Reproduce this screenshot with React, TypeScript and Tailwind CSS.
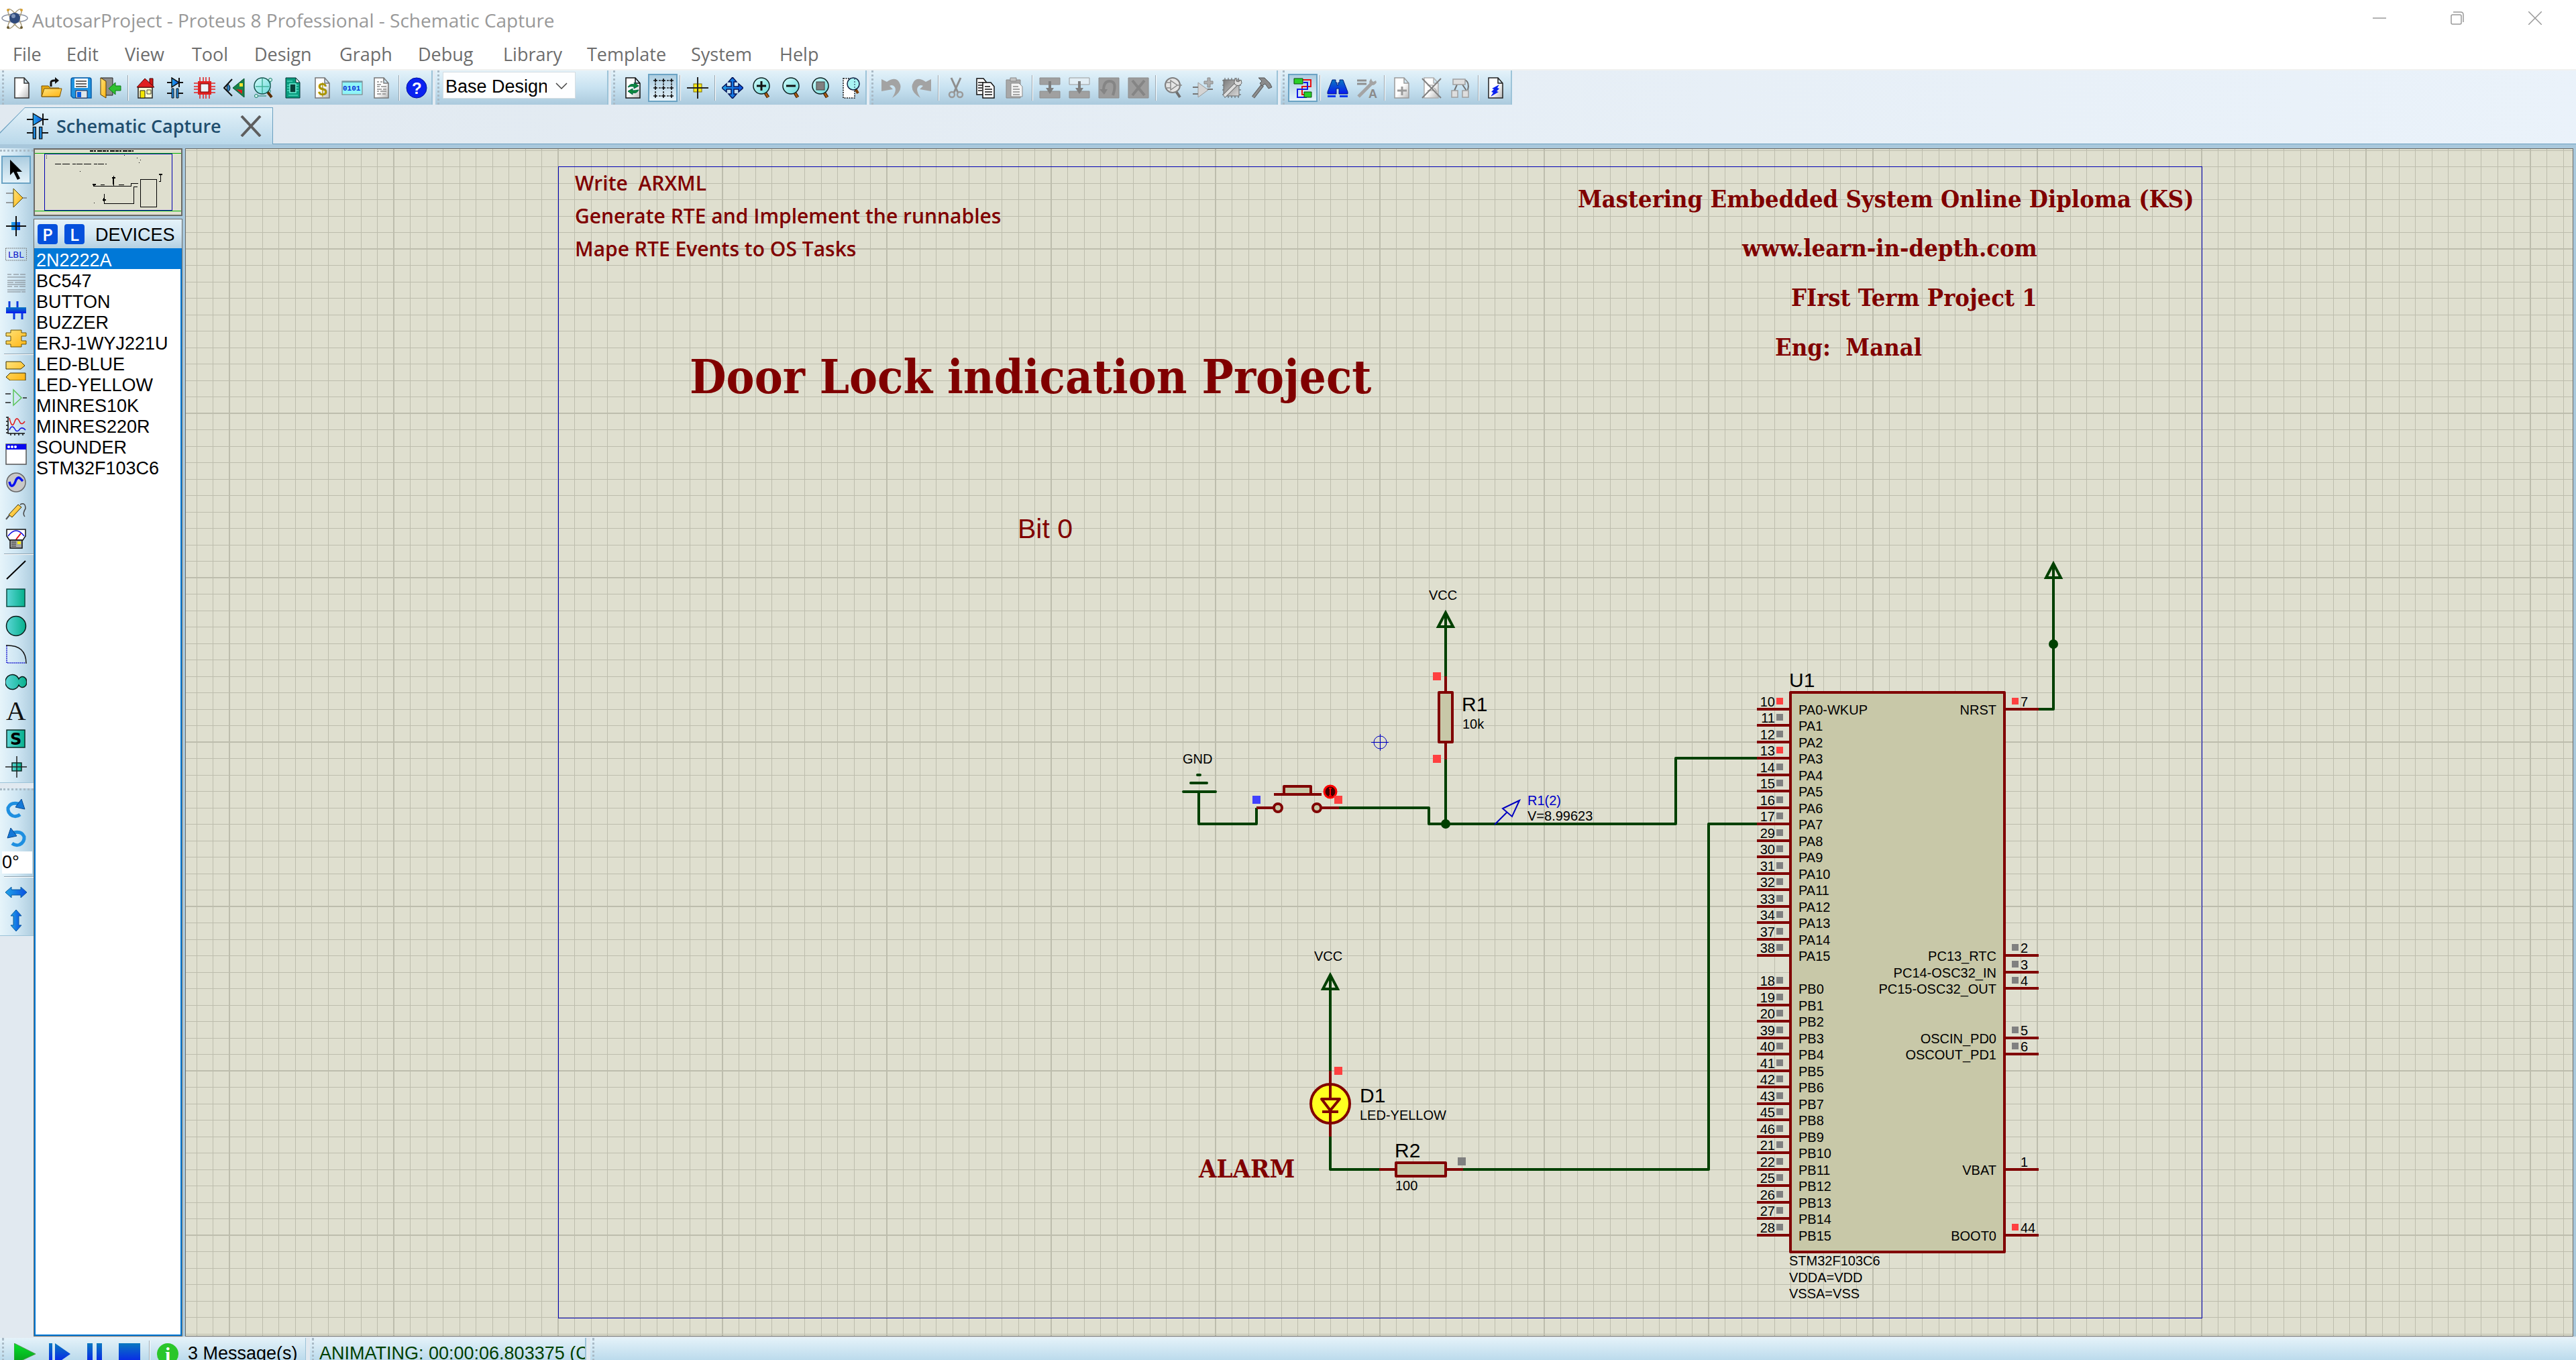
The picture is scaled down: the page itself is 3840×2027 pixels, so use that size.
import React from "react";

/* ---------- shared helpers ---------- */

const Icon = ({ children, className = "size-8" }: { children: React.ReactNode; className?: string }) => (
  <svg viewBox="0 0 32 32" className={className} fill="none" aria-hidden="true">
    {children}
  </svg>
);

const Defs = () => (
  <svg className="absolute size-0" aria-hidden="true">
    <defs>
      <linearGradient id="gold" x1="0" y1="0" x2="1" y2="1">
        <stop offset="0" stopColor="#ffe37a" />
        <stop offset="1" stopColor="#ffb412" />
      </linearGradient>
      <linearGradient id="blue" x1="0" y1="0" x2="1" y2="0">
        <stop offset="0" stopColor="#22a4e8" />
        <stop offset="1" stopColor="#0a4fe0" />
      </linearGradient>
      <linearGradient id="deep" x1="0" y1="0" x2="0" y2="1">
        <stop offset="0" stopColor="#0a78c0" />
        <stop offset="1" stopColor="#0818f0" />
      </linearGradient>
      <linearGradient id="teal" x1="0" y1="0" x2="1" y2="0">
        <stop offset="0" stopColor="#5cd6d6" />
        <stop offset="1" stopColor="#06b08c" />
      </linearGradient>
      <linearGradient id="paper" x1="0" y1="0" x2="1" y2="1">
        <stop offset="0.5" stopColor="#ffffff" />
        <stop offset="1" stopColor="#b8b8b8" />
      </linearGradient>
      <linearGradient id="play" x1="0" y1="0" x2="0" y2="1">
        <stop offset="0" stopColor="#06e02a" />
        <stop offset="1" stopColor="#079a1c" />
      </linearGradient>
      <linearGradient id="chip" x1="0" y1="0" x2="1" y2="1">
        <stop offset="0" stopColor="#7c7c7c" />
        <stop offset="1" stopColor="#d8d8d8" />
      </linearGradient>
      <linearGradient id="glass" x1="0" y1="0" x2="1" y2="1">
        <stop offset="0" stopColor="#d4fbfb" />
        <stop offset="1" stopColor="#6adada" />
      </linearGradient>
    </defs>
  </svg>
);

const page = (stroke: string) => (
  <path d="M5 1H19l7 8v22H5z M19 1v8h7" fill="url(#paper)" stroke={stroke} strokeWidth="1.5" />
);

const lens = (
  <>
    <path d="M20 22l5 8" stroke="#2b1400" strokeWidth="5" />
    <path d="M20 22l5 8" stroke="#a85a10" strokeWidth="3" />
    <circle cx="15" cy="13" r="12" fill="url(#glass)" stroke="#0d2020" strokeWidth="1.5" />
  </>
);

/* ---------- toolbar icons ---------- */

const I = {
  blank: <Icon>{page("#333")}</Icon>,
  open: (
    <Icon>
      <path d="M1 29V13h10l3 3h13v13z" fill="#e5a810" stroke="#7a5200" />
      <path d="M1 29l4-12h26l-3 12z" fill="url(#gold)" stroke="#7a5200" />
      <path d="M15 14V8q0-3 5-3h4" stroke="#111" strokeWidth="3" />
      <path d="M21 0l6 5-6 5z" fill="#111" />
    </Icon>
  ),
  save: (
    <Icon>
      <path d="M1 4q0-3 3-3h24q3 0 3 3v27H4l-3-3z" fill="#1f93e0" stroke="#0a5da8" strokeWidth="1.5" />
      <path d="M6 2h20v14H6z" fill="#fff" />
      <path d="M8 6h16M8 10h16M8 14h16" stroke="#333" strokeWidth="1.5" />
      <path d="M8 20h17v11H8z" fill="#dfe6ea" stroke="#224" />
      <path d="M10 22h6v8h-6z" fill="#0a5de0" />
    </Icon>
  ),
  exit: (
    <Icon>
      <path d="M1 1h18v26H9z" fill="#8d8d8d" stroke="#222" />
      <path d="M1 1l8 5v25l-8-5z" fill="url(#gold)" stroke="#5c3c00" />
      <path d="M31 13v7h-8v6l-10-9 10-9v5z" fill="#2fc02f" stroke="#0e7a1a" />
    </Icon>
  ),
  home: (
    <Icon>
      <path d="M22 2h5v12h-5z" fill="#d01818" stroke="#400" />
      <path d="M5 15h21v16H5z" fill="#ffffd8" stroke="#222" strokeWidth="1.5" />
      <path d="M3 15L15 2l14 13z" fill="#e02020" stroke="#500" />
      <path d="M8 20h7v11H8z" fill="#f6e800" stroke="#222" />
      <path d="M18 19h6v6h-6z" fill="#fffbb0" stroke="#444" />
    </Icon>
  ),
  schematic: (
    <Icon>
      <path d="M4 8h24M22 1v14M4 24h8M20 24h8" stroke="#111" strokeWidth="2" />
      <path d="M11 1v14l11-7z" fill="url(#blue)" stroke="#111" strokeWidth="1.5" />
      <path d="M11 17h3v14h-3zM18 17h3v14h-3z" fill="#1f8ae0" stroke="#111" />
    </Icon>
  ),
  pcb: (
    <Icon>
      <path
        d="M9 0v32M14 0v32M18 0v32M23 0v32M0 9h32M0 14h32M0 18h32M0 23h32"
        stroke="#e02020"
        strokeWidth="1.5"
      />
      <rect x="6" y="6" width="20" height="20" fill="#e02020" />
      <rect x="10" y="10" width="12" height="12" fill="#eef4f8" stroke="#700" />
    </Icon>
  ),
  viewer3d: (
    <Icon>
      <path d="M31 2v28L14 16z" fill="#18834a" stroke="#04502a" />
      <path d="M24 9h5v5h-5z" fill="#f5e430" />
      <path d="M19 18l9 1v6z" fill="#e01c1c" />
      <path d="M13 3L1 16l12 12" stroke="#111" strokeWidth="2" />
      <path d="M7 10q6 6 0 12q-4-6 0-12" fill="#2f7fc0" stroke="#111" />
    </Icon>
  ),
  gerber: (
    <Icon>
      <path d="M21 21l7 9" stroke="#5a2c00" strokeWidth="4" />
      <circle cx="14" cy="13" r="12" fill="url(#glass)" stroke="#14554e" strokeWidth="1.5" />
      <path d="M4 14h20M14 2v22" stroke="#43b39b" strokeWidth="1.5" />
      <path d="M26 3v8M26 19v4M6 28h14" stroke="#127c68" />
      <circle cx="26" cy="4" r="2.5" fill="#d7f5ee" stroke="#127c68" />
      <circle cx="5" cy="28" r="2.5" fill="#d7f5ee" stroke="#127c68" />
    </Icon>
  ),
  explorer: (
    <Icon>
      <path d="M5 1h15l6 7v23H5z" fill="#0a9c7e" stroke="#033" />
      <path d="M20 1v7h6z" fill="#fff" stroke="#033" />
      <rect x="11" y="10" width="9" height="13" fill="#083f38" stroke="#6ff0d8" strokeWidth="1.5" />
      <path d="M7 6h8M7 12h4M7 16h4M7 20h4M20 12h4M20 16h4M20 20h4M9 27h14" stroke="#6ff0d8" />
    </Icon>
  ),
  bom: (
    <Icon>
      {page("#777")}
      <text x="9" y="27" fontSize="25" fontWeight="700" fill="#a89400" className="font-['Liberation_Sans',sans-serif]">
        $
      </text>
    </Icon>
  ),
  source: (
    <Icon>
      <rect x="1" y="6" width="30" height="20" fill="#8ff4f8" stroke="#777" />
      <rect x="1" y="6" width="30" height="2" fill="#6f9aa8" />
      <text x="2" y="20" fontSize="11" fontWeight="700" fill="#0a2fd8" className="font-['Liberation_Mono',monospace]">
        0101
      </text>
    </Icon>
  ),
  notes: (
    <Icon>
      {page("#777")}
      <path
        d="M9 7h3M14 7h3M9 11h6M9 14h4M15 14h8M9 18h7M18 18h5M9 21h3M14 21h9M9 25h6M17 25h5"
        stroke="#8a8a8a"
        strokeWidth="1.5"
      />
    </Icon>
  ),
  help: (
    <Icon>
      <circle cx="16" cy="16" r="15" fill="#0a22f0" stroke="#0012a0" />
      <text x="9" y="25" fontSize="24" fontWeight="700" fill="#fff" className="font-['Liberation_Sans',sans-serif]">
        ?
      </text>
    </Icon>
  ),
  redraw: (
    <Icon>
      {page("#111")}
      <path d="M8 15q3-6 10-4l-1-3 7 5-7 4v-3q-5-1-9 1z" fill="#0d8a3c" stroke="#064" />
      <path d="M24 19q-3 6-9 4v3l-7-5 7-4v3q5 0 9-1z" fill="#0d8a3c" stroke="#064" />
    </Icon>
  ),
  grid: (
    <Icon>
      <path d="M4 5h26M4 16h26M4 28h26M5 3v27M17 3v27M29 3v27" stroke="#222" strokeWidth="1.5" strokeDasharray="3 3" />
      <path
        d="M2 5h6M14 5h6M26 5h6M2 16h6M14 16h6M26 16h6M2 28h6M14 28h6M26 28h6M5 2v6M17 2v6M29 2v6M5 13v6M17 13v6M29 13v6M5 25v6M17 25v6M29 25v6"
        stroke="#111"
        strokeWidth="1.5"
      />
    </Icon>
  ),
  origin: (
    <Icon>
      <rect x="10" y="10" width="12" height="12" fill="#f6e81a" stroke="#7a6a00" />
      <path d="M16 0v32M0 16h32" stroke="#222" strokeWidth="2" />
    </Icon>
  ),
  pan: (
    <Icon>
      <path
        d="M16 0l6 7h-4v7h7v-4l7 6-7 6v-4h-7v7h4l-6 7-6-7h4v-7H7v4l-7-6 7-6v4h7V7h-4z"
        fill="url(#blue)"
        stroke="#04155a"
        strokeWidth="1.5"
      />
    </Icon>
  ),
  zoomIn: (
    <Icon>
      {lens}
      <path d="M15 6v14M8 13h14" stroke="#111" strokeWidth="3" />
    </Icon>
  ),
  zoomOut: (
    <Icon>
      {lens}
      <path d="M8 13h14" stroke="#111" strokeWidth="3" />
    </Icon>
  ),
  zoomAll: (
    <Icon>
      {lens}
      <rect x="9" y="7" width="12" height="12" fill="#808080" stroke="#444" />
    </Icon>
  ),
  zoomArea: (
    <Icon>
      <rect x="5" y="2" width="17" height="29" fill="#fff" stroke="#111" strokeWidth="1.5" strokeDasharray="2 1.5" />
      <path d="M23 17l4 7" stroke="#7a3f08" strokeWidth="4" />
      <circle cx="20" cy="10" r="9" fill="#a8f4f4" stroke="#124" strokeWidth="1.5" />
      <path d="M22 2v16" stroke="#124" strokeDasharray="2 2" />
    </Icon>
  ),
  undo: (
    <Icon>
      <path d="M9 7Q24-3 29 11Q32 22 17 31Q24 20 21 15Q18 10 13 13l5 5L1 21V3z" fill="#a3a3a3" />
    </Icon>
  ),
  redo: (
    <Icon>
      <path d="M23 7Q8-3 3 11Q0 22 15 31Q8 20 11 15Q14 10 19 13l-5 5 17 3V3z" fill="#a3a3a3" />
    </Icon>
  ),
  cut: (
    <Icon>
      <path d="M9 1l10 22M23 1L13 23" stroke="#8e8e8e" strokeWidth="3" />
      <circle cx="10" cy="26" r="4" stroke="#9a9a9a" strokeWidth="2.5" />
      <circle cx="22" cy="26" r="4" stroke="#9a9a9a" strokeWidth="2.5" />
    </Icon>
  ),
  copy: (
    <Icon>
      <path d="M3 2h10l4 5v19H3z" fill="#fff" stroke="#111" strokeWidth="1.5" />
      <path d="M5 8h8M5 12h8M5 16h6M5 20h6" stroke="#111" strokeWidth="1.5" />
      <path d="M12 8h12l5 6v17H12z" fill="#fff" stroke="#111" strokeWidth="1.5" />
      <path d="M15 14h8M15 18h11M15 22h11M15 26h11" stroke="#111" strokeWidth="1.5" />
    </Icon>
  ),
  paste: (
    <Icon>
      <path d="M3 4h21v27H3z" fill="#a8a8a8" stroke="#8a8a8a" />
      <path d="M9 1h9v5H9z" fill="#c4c4c4" stroke="#888" />
      <path d="M10 9h12l5 5v15H10z" fill="#f4f4f4" stroke="#8a8a8a" />
      <path d="M13 14h8M13 18h10M13 22h10M13 26h10" stroke="#8a8a8a" strokeWidth="1.5" />
    </Icon>
  ),
  blockCopy: (
    <Icon>
      <path d="M1 1h30v10H1zM1 21h30v10H1z" fill="#a0a0a0" stroke="#8c8c8c" />
      <path d="M14 6h4v10h4l-6 9-6-9h4z" fill="#7e7e7e" />
    </Icon>
  ),
  blockMove: (
    <Icon>
      <path d="M1 1h30v10H1z" fill="#e2eef5" stroke="#9a9a9a" />
      <path d="M1 21h30v10H1z" fill="#a0a0a0" stroke="#8c8c8c" />
      <path d="M14 6h4v10h4l-6 9-6-9h4z" fill="#7e7e7e" />
    </Icon>
  ),
  blockRotate: (
    <Icon>
      <path d="M1 1h30v30H1z" fill="#9c9c9c" stroke="#8c8c8c" />
      <path d="M22 27Q29 6 17 6Q8 6 8 20" stroke="#858585" strokeWidth="4" />
      <path d="M2 18l7 8 5-8z" fill="#858585" />
    </Icon>
  ),
  blockDelete: (
    <Icon>
      <path d="M1 1h30v30H1z" fill="#9c9c9c" stroke="#8c8c8c" />
      <path d="M7 5l18 22M25 5L7 27" stroke="#858585" strokeWidth="4" />
    </Icon>
  ),
  pick: (
    <Icon>
      <path d="M20 21l6 9" stroke="#6e6e6e" strokeWidth="4" />
      <circle cx="15" cy="12" r="11" fill="#e4e4e4" stroke="#808080" strokeWidth="2" />
      <path d="M6 8h6M6 16h6M12 5v14l10-7zM22 12h7" stroke="#8a8a8a" strokeWidth="1.5" />
    </Icon>
  ),
  makeDevice: (
    <Icon>
      <path d="M9 8v22l15-11z" fill="#d4d4d4" stroke="#9a9a9a" />
      <path d="M1 15h8M1 25h8M23 18h8" stroke="#777" strokeWidth="2" />
      <path d="M23 1h4v5h4v4h-4v5h-4v-5h-5V6h5z" fill="#b0b0b0" stroke="#888" />
    </Icon>
  ),
  packaging: (
    <Icon>
      <path d="M5 1v30M10 1v30M15 1v30M20 1v30M25 1v30M1 5h28M1 12h28M1 19h28M1 26h28" stroke="#555" />
      <rect x="3" y="4" width="23" height="24" fill="url(#chip)" stroke="#666" />
      <path d="M4 28L22 10" stroke="#666" strokeWidth="6" />
      <path d="M4 28L22 10" stroke="#dedede" strokeWidth="4" />
      <path d="M22 1q-5 5-2 10q6 4 10-2l-1-5-4 3-3-1z" fill="#dedede" stroke="#666" />
    </Icon>
  ),
  decompose: (
    <Icon>
      <path d="M3 30L17 12" stroke="#555" strokeWidth="5" />
      <path d="M3 30L17 12" stroke="#8d8d8d" strokeWidth="3" />
      <path d="M11 1h9l8 8 3 6-5 2-5-7-5 3-3-4 3-3z" fill="#8a8a8a" stroke="#555" />
    </Icon>
  ),
  autoroute: (
    <Icon>
      <path d="M16 4h12v10H15v12h4" stroke="#e81010" strokeWidth="2" />
      <path d="M17 8h6v10H8v12h14" stroke="#1018e8" strokeWidth="2" />
      <path d="M3 2h13v8H3zM18 22h11v8H18z" fill="#28d028" stroke="#064a06" />
    </Icon>
  ),
  find: (
    <Icon>
      <path d="M8 4h5v4h2v4h2V8h2V4h5l7 18v3H18v-8h-4v8H1v-3z" fill="url(#deep)" stroke="#041a80" />
      <path d="M1 27h12v3H1zM19 27h12v3H19z" fill="#0a38f0" />
    </Icon>
  ),
  property: (
    <Icon>
      <path d="M1 5h14M1 10h14" stroke="#909090" strokeWidth="3" />
      <path d="M3 29L22 10" stroke="#a4a4a4" strokeWidth="5" />
      <path d="M22 2q-5 5-1 9q5 3 9-3l-1-3-4 2-2-2z" fill="#a4a4a4" />
      <text x="18" y="31" fontSize="18" fontWeight="700" fill="#8a8a8a" className="font-['Liberation_Sans',sans-serif]">
        A
      </text>
    </Icon>
  ),
  newSheet: (
    <Icon>
      {page("#9a9a9a")}
      <path d="M16 14v13M9 20h14" stroke="#9a9a9a" strokeWidth="3" />
    </Icon>
  ),
  removeSheet: (
    <Icon>
      {page("#b0b0b0")}
      <path d="M10 12h8v8h-8M20 16l4 6" stroke="#b0b0b0" strokeWidth="1.5" />
      <path d="M2 2l28 29M30 2L2 31" stroke="#808080" strokeWidth="2" />
    </Icon>
  ),
  exitSheet: (
    <Icon>
      <path d="M10 11L6 20M18 11l6 9M22 4q7 4 4 15" stroke="#707070" strokeWidth="2" />
      <path d="M4 3h18v8H4zM2 20h9v10H2zM18 20h9v10h-9z" fill="#dedede" stroke="#a0a0a0" strokeWidth="1.5" />
    </Icon>
  ),
  erc: (
    <Icon>
      {page("#222")}
      <path d="M21 11L10 17l3 1-4 4 3 1-4 6 12-7-3-1 4-4-3-1z" fill="#0a22f0" />
    </Icon>
  ),
  /* mode selector icons */
  select: (
    <Icon>
      <path d="M7 1v23l5-5 6 12 4-2-5-10h8z" fill="#000" />
    </Icon>
  ),
  component: (
    <Icon>
      <path d="M1 9h11M1 23h11M24 16h8" stroke="#808080" strokeWidth="1.5" />
      <path d="M12 2v28l14-14z" fill="url(#gold)" stroke="#5a4a00" />
    </Icon>
  ),
  junction: (
    <Icon>
      <rect x="9" y="10" width="13" height="12" fill="url(#blue)" />
      <path d="M16 1v30M1 16h30" stroke="#111" strokeWidth="2" />
    </Icon>
  ),
  label: (
    <Icon>
      <rect x="0.5" y="7" width="31" height="18" stroke="#777" strokeDasharray="2 1" />
      <text x="4" y="21" fontSize="13" fill="#0a12c8" className="font-['DejaVu_Sans',sans-serif]">
        LBL
      </text>
    </Icon>
  ),
  script: (
    <Icon>
      <path
        d="M3 4h6M12 4h8M22 4h8M3 8h27M3 13h27M3 16h9M14 16h16M3 19h27M3 22h7M13 22h6M21 22h9M3 27h27M3 30h20M24 30h6"
        stroke="#7c8288"
      />
    </Icon>
  ),
  bus: (
    <Icon>
      <path d="M6 2v10M18 2v10M13 18v11M25 18v11" stroke="#0a38e0" strokeWidth="3" />
      <rect x="1" y="11" width="30" height="9" fill="url(#deep)" />
    </Icon>
  ),
  subcircuit: (
    <Icon>
      <path d="M8 3h16v4h7v5h-7v7h7v5h-7v4H8v-4H1v-5h7v-7H1V7h7z" fill="url(#gold)" stroke="#6b5200" />
    </Icon>
  ),
  terminal: (
    <Icon>
      <path d="M1 4h22l6 6-6 5H1zM30 21H7l-6 6 6 5h23z" fill="url(#gold)" stroke="#3c3000" />
    </Icon>
  ),
  pin: (
    <Icon>
      <path d="M0 10h8M0 23h8M26 16h6" stroke="#222" strokeWidth="1.5" />
      <path d="M12 4v23l12-11z" stroke="#5cc45c" strokeWidth="1.5" />
    </Icon>
  ),
  graph: (
    <Icon>
      <path
        d="M4 2v25h25M1 3h3M1 9h3M1 15h3M1 21h3M1 26h3M8 27v3M14 27v3M20 27v3M26 27v3"
        stroke="#111"
        strokeWidth="1.5"
      />
      <path d="M6 4q4 18 8 5q3-9 8 2q3 4 7-2" stroke="#e01818" strokeWidth="1.5" />
      <path d="M6 22q4-10 9 0q3 4 7-2q4-3 8 2" stroke="#1818e0" strokeWidth="1.5" />
    </Icon>
  ),
  popup: (
    <Icon>
      <rect x="1" y="1" width="30" height="30" fill="#fff" stroke="#555" strokeWidth="1.5" />
      <rect x="1" y="1" width="30" height="8" fill="#0808f0" />
      <circle cx="5" cy="5" r="2" fill="#fff" />
      <circle cx="10" cy="5" r="2" fill="#fff" />
      <circle cx="15" cy="5" r="2" fill="#fff" />
    </Icon>
  ),
  generator: (
    <Icon>
      <circle cx="16" cy="16" r="14" fill="#c8c8c8" stroke="#666" strokeWidth="1.5" />
      <path d="M6 15q2 9 6 5q2-2 4-8q3-5 6-2l4 4" stroke="#0a12f0" strokeWidth="3.5" />
    </Icon>
  ),
  probe: (
    <Icon>
      <path d="M1 29l5-6" stroke="#555" strokeWidth="2" />
      <path d="M5 22L19 7l5 4L10 26z" fill="url(#gold)" stroke="#3c3000" />
      <path d="M22 7q8-4 8 6q-5 8-1 12" stroke="#444" strokeWidth="1.5" />
    </Icon>
  ),
  instrument: (
    <Icon>
      <path d="M2 2h28v10l-4 6H6l-4-6z" fill="#fff" stroke="#111" strokeWidth="1.5" />
      <path d="M4 12Q16-4 28 12" stroke="#1010e0" strokeWidth="1.5" />
      <path d="M16 17l7-9" stroke="#e01010" strokeWidth="2" />
      <rect x="7" y="18" width="18" height="12" fill="#a8a8a8" stroke="#111" strokeWidth="1.5" />
      <path d="M9 21h7M9 24h7M9 27h7" stroke="#222" />
      <path d="M18 20h5v4h-5z" fill="#f6ee10" />
    </Icon>
  ),
  line: (
    <Icon>
      <path d="M2 30L30 3" stroke="#000" strokeWidth="2" />
    </Icon>
  ),
  box: (
    <Icon>
      <rect x="2" y="3" width="27" height="26" fill="url(#teal)" stroke="#0a4a40" strokeWidth="1.5" />
    </Icon>
  ),
  circle: (
    <Icon>
      <circle cx="16" cy="16" r="14.5" fill="url(#teal)" stroke="#0a1a18" strokeWidth="1.5" />
    </Icon>
  ),
  arc: (
    <Icon>
      <path d="M2 3v26H31" stroke="#1818d0" strokeWidth="1.5" strokeDasharray="2 1" />
      <path d="M1 3q30-1 30 27" stroke="#111" strokeWidth="1.5" />
    </Icon>
  ),
  path: (
    <Icon>
      <path d="M20 11a10.5 11 0 1 0 0 9a6.5 8 0 1 0 0-9z" fill="url(#teal)" stroke="#0a1a18" strokeWidth="1.5" />
    </Icon>
  ),
  text: (
    <Icon>
      <text x="1" y="30" fontSize="41" fill="#111" className="font-['Liberation_Serif',serif]">
        A
      </text>
    </Icon>
  ),
  symbol: (
    <Icon>
      <rect x="2" y="3" width="27" height="26" fill="url(#teal)" stroke="#0a2a24" strokeWidth="1.5" />
      <text x="7" y="25" fontSize="24" fontWeight="700" fill="#000" className="font-['DejaVu_Sans',sans-serif]">
        S
      </text>
    </Icon>
  ),
  marker: (
    <Icon>
      <rect x="10" y="10" width="14" height="12" fill="url(#teal)" stroke="#0a2a24" strokeWidth="1.5" />
      <path d="M17 0v32M0 16h32" stroke="#222" strokeWidth="1.5" />
    </Icon>
  ),
  rotateCw: (
    <Icon>
      <path d="M22 24Q17 28 11 26Q3 22 4 14Q8 5 20 8" stroke="#1f8fe0" strokeWidth="5" />
      <path d="M24 1l5 15-14-3z" fill="#1478d8" stroke="#0a4a90" />
    </Icon>
  ),
  rotateCcw: (
    <Icon>
      <path d="M10 25Q15 29 21 27Q29 23 28 15Q24 6 12 9" stroke="#1f8fe0" strokeWidth="5" />
      <path d="M8 2L3 17l14-3z" fill="#1478d8" stroke="#0a4a90" />
    </Icon>
  ),
  mirrorH: (
    <Icon>
      <path d="M0 16l9-8v4h14V8l9 8-9 8v-4H9v4z" fill="url(#blue)" stroke="#0a5aa0" />
    </Icon>
  ),
  mirrorV: (
    <Icon>
      <path d="M16 0l8 9h-4v14h4l-8 9-8-9h4V9H8z" fill="url(#blue)" stroke="#0a5aa0" />
    </Icon>
  ),
  play: (
    <Icon>
      <path d="M0 0v31l32-15z" fill="url(#play)" stroke="#4a9a4a" />
    </Icon>
  ),
  step: (
    <Icon>
      <path d="M0 0h5v32H0zM9 0l23 16L9 32z" fill="url(#deep)" />
    </Icon>
  ),
  pause: (
    <Icon>
      <path d="M5 0h8v32H5zM19 0h8v32h-8z" fill="url(#deep)" />
    </Icon>
  ),
  stop: (
    <Icon>
      <rect width="32" height="32" fill="url(#deep)" />
    </Icon>
  ),
  info: (
    <Icon>
      <circle cx="16" cy="16" r="16" fill="#2ac62a" />
      <text x="12" y="27" fontSize="30" fontWeight="700" fill="#fff" className="font-['Liberation_Serif',serif]">
        i
      </text>
    </Icon>
  ),
};

type Item = [keyof typeof I, string] | "sep";

const GROUP_BG = "bg-linear-to-b from-[#e4f2f9] via-[#c8e2f1] to-[#abcadd]";

const Grip = () => <div className="ml-[3px] h-full w-[3px] border-l-[3px] border-dotted border-[#a9bac6]" />;

const ToolButton = ({ name, label, active }: { name: keyof typeof I; label: string; active?: boolean }) => (
  <button
    type="button"
    title={label}
    aria-label={label}
    className={
      "flex h-[42px] w-[44px] shrink-0 items-center justify-center " +
      (active ? "border-2 border-[#6ba3c4] bg-linear-to-b from-[#accde0] to-[#e4f2f9]" : "")
    }
  >
    {I[name]}
  </button>
);

const Group = ({ items, active, children }: { items?: Item[]; active?: string; children?: React.ReactNode }) => (
  <div className={"flex h-[51px] items-center border-r-2 border-[#9cc3d8] " + GROUP_BG}>
    <Grip />
    <div className="ml-[5px] flex items-center">
      {items?.map((it, i) =>
        it === "sep" ? (
          <span key={i} className="flex w-2 justify-center">
            <span className="h-[38px] w-[2px] border-r border-white bg-[#9aa7b0]" />
          </span>
        ) : (
          <ToolButton key={i} name={it[0]} label={it[1]} active={active === it[0]} />
        )
      )}
      {children}
    </div>
  </div>
);

/* ---------- header ---------- */

const MENU: [string, string][] = [
  ["File", "w-[80px]"],
  ["Edit", "w-[87px]"],
  ["View", "w-[100px]"],
  ["Tool", "w-[93px]"],
  ["Design", "w-[127px]"],
  ["Graph", "w-[117px]"],
  ["Debug", "w-[127px]"],
  ["Library", "w-[125px]"],
  ["Template", "w-[155px]"],
  ["System", "w-[132px]"],
  ["Help", "w-[90px]"],
];

const TitleBar = () => (
  <header className="flex h-[62px] shrink-0 items-start bg-white pl-[2px]">
    <svg viewBox="0 0 40 32" className="mt-3 h-8 w-10" fill="none" aria-hidden="true">
      <ellipse cx="20" cy="15" rx="19" ry="6" stroke="#8b93a5" strokeWidth="1.5" />
      <ellipse cx="20" cy="16" rx="17" ry="5" stroke="#a79a7a" strokeWidth="1.5" transform="rotate(57 20 16)" />
      <ellipse cx="20" cy="16" rx="17" ry="5" stroke="#a79a7a" strokeWidth="1.5" transform="rotate(-57 20 16)" />
      <circle cx="20" cy="15" r="8" fill="#2f4a7c" />
      <circle cx="18" cy="12" r="3" fill="#7f95ba" />
      <circle cx="10" cy="3" r="2" fill="#d8a030" />
      <circle cx="30" cy="3" r="2" fill="#d8a030" />
      <circle cx="10" cy="29" r="2" fill="#6b5a30" />
      <circle cx="30" cy="29" r="2" fill="#6b5a30" />
    </svg>
    <h1 className="mt-[10px] ml-[6px] text-[28px] leading-10 text-[#999999]">
      AutosarProject - Proteus 8 Professional - Schematic Capture
    </h1>
    <div className="ml-auto flex pr-[3px]">
      {[
        ["Minimize", "M0 10h20"],
        ["Restore", "M3 5h11a2 2 0 0 1 2 2v10a2 2 0 0 1-2 2H3a2 2 0 0 1-2-2V7a2 2 0 0 1 2-2M4 1h11q4 0 4 4v11"],
        ["Close", "M0 0l20 20M20 0L0 20"],
      ].map(([label, d]) => (
        <button key={label} type="button" aria-label={label} className="flex h-[54px] w-[116px] items-center justify-center">
          <svg viewBox="0 0 20 20" className="size-5" fill="none" stroke="#999" strokeWidth="1.5" aria-hidden="true">
            <path d={d} />
          </svg>
        </button>
      ))}
    </div>
  </header>
);

const MenuBar = () => (
  <nav className="flex h-[41px] shrink-0 items-start bg-white pl-[19px] text-[27px] leading-[38px] text-[#6d6d6d]">
    {MENU.map(([name, w]) => (
      <button key={name} type="button" className={"shrink-0 text-left " + w}>
        {name}
      </button>
    ))}
  </nav>
);

const Toolbar = () => (
  <div className="flex h-[53px] shrink-0 gap-1 border-t-2 border-[#f1f1f0] bg-linear-to-r from-[#e1e9f0] to-[#eaf2fa] font-['Liberation_Sans',sans-serif]">
    <Group
      items={[
        ["blank", "New project"],
        ["open", "Open project"],
        ["save", "Save project"],
        ["exit", "Close project"],
        "sep",
        ["home", "Home page"],
        ["schematic", "Schematic capture"],
        ["pcb", "PCB layout"],
        ["viewer3d", "3D visualizer"],
        ["gerber", "Gerber viewer"],
        ["explorer", "Design explorer"],
        ["bom", "Bill of materials"],
        ["source", "Source code"],
        ["notes", "Project notes"],
        "sep",
        ["help", "Help"],
      ]}
    />
    <Group>
      <div className="relative mr-[47px] mb-2 w-[198px]">
        <select
          aria-label="Design variant"
          className="block h-10 w-full appearance-none border border-[#d5dde2] bg-[#fdfeff] pt-1 pr-[42px] pl-[3px] text-[27px] leading-8 text-black"
        >
          <option>Base Design</option>
        </select>
        <svg
          viewBox="0 0 18 10"
          className="pointer-events-none absolute top-[16px] right-3 h-[10px] w-[18px]"
          fill="none"
          aria-hidden="true"
        >
          <path d="M1 1l8 8 8-8" stroke="#444" strokeWidth="1.5" />
        </svg>
      </div>
    </Group>
    <Group
      active="grid"
      items={[
        ["redraw", "Redraw display"],
        ["grid", "Toggle grid"],
        "sep",
        ["origin", "Toggle false origin"],
        "sep",
        ["pan", "Center at cursor"],
        ["zoomIn", "Zoom in"],
        ["zoomOut", "Zoom out"],
        ["zoomAll", "Zoom to view entire sheet"],
        ["zoomArea", "Zoom to area"],
      ]}
    />
    <Group
      items={[
        ["undo", "Undo"],
        ["redo", "Redo"],
        "sep",
        ["cut", "Cut"],
        ["copy", "Copy"],
        ["paste", "Paste"],
        "sep",
        ["blockCopy", "Block copy"],
        ["blockMove", "Block move"],
        ["blockRotate", "Block rotate"],
        ["blockDelete", "Block delete"],
        "sep",
        ["pick", "Pick parts"],
        ["makeDevice", "Make device"],
        ["packaging", "Packaging tool"],
        ["decompose", "Decompose"],
      ]}
    />
    <Group
      active="autoroute"
      items={[
        ["autoroute", "Wire autorouter"],
        "sep",
        ["find", "Search and tag"],
        ["property", "Property assignment tool"],
        "sep",
        ["newSheet", "New sheet"],
        ["removeSheet", "Remove sheet"],
        ["exitSheet", "Exit to parent sheet"],
        "sep",
        ["erc", "Electrical rules check"],
      ]}
    />
  </div>
);

const TabBar = () => (
  <div className="flex h-[59px] shrink-0 bg-linear-to-r from-[#e1e9f0] to-[#eaf2fa] pt-1">
    <div className="bg-[#6ba0c0] pt-px pr-px [clip-path:polygon(37px_0,100%_0,100%_100%,0_100%,0_37px)]">
      <div className="flex h-full items-center bg-linear-to-b from-[#e4f2f9] to-[#b9d8ea] pr-4 pl-10 [clip-path:polygon(37px_0,100%_0,100%_100%,0_100%,0_38px)]">
        <svg viewBox="4 0 24 32" className="h-10 w-8" preserveAspectRatio="none" fill="none" aria-hidden="true">
          <path d="M4 8h24M22 1v14M4 24h8M20 24h8" stroke="#111" strokeWidth="1.5" />
          <path d="M11 1v14l11-7z" fill="url(#blue)" stroke="#111" />
          <path d="M11 17h3v14h-3zM18 17h3v14h-3z" fill="#1f8ae0" stroke="#111" />
        </svg>
        <button
          type="button"
          className="ml-3 w-[274px] text-left font-['Open_Sans',sans-serif] text-[27px] leading-10 font-semibold text-[#1f4e6e]"
        >
          Schematic Capture
        </button>
        <button type="button" aria-label="Close tab">
          <svg viewBox="0 0 32 32" className="size-8" stroke="#5e5e5e" strokeWidth="4" aria-hidden="true">
            <path d="M2 1l28 30M30 1L2 31" />
          </svg>
        </button>
      </div>
    </div>
    <div className="flex-1 border-b border-[#6ba0c0]" />
  </div>
);

/* ---------- left side ---------- */

const SIDE_BG = "bg-linear-to-r from-[#e6f4fa] via-[#cfe6f3] to-[#aecddf]";

const MODES: Item[] = [
  ["select", "Selection mode"],
  ["component", "Component mode"],
  ["junction", "Junction dot mode"],
  ["label", "Wire label mode"],
  ["script", "Text script mode"],
  ["bus", "Buses mode"],
  ["subcircuit", "Subcircuit mode"],
  "sep",
  ["terminal", "Terminals mode"],
  ["pin", "Device pins mode"],
  ["graph", "Graph mode"],
  ["popup", "Active popup mode"],
  ["generator", "Generator mode"],
  ["probe", "Probe mode"],
  ["instrument", "Instruments mode"],
  "sep",
  ["line", "2D line"],
  ["box", "2D box"],
  ["circle", "2D circle"],
  ["arc", "2D arc"],
  ["path", "2D path"],
  ["text", "2D text"],
  ["symbol", "2D symbol"],
  ["marker", "2D marker"],
];

const SideSep = () => <div className="my-px ml-1 h-[2px] w-11 border-b border-white bg-[#8fa3b0]" />;

const SideGrip = () => <div className="h-[3px] border-t-[3px] border-dotted border-[#a9bac6]" />;

const SideTools = () => (
  <aside className="w-[50px] shrink-0 bg-[#e1e9f0]">
    <div className={"border-b border-[#9cc3d8] pt-[2px] pb-[2px] " + SIDE_BG}>
      <SideGrip />
      <div className="mt-[6px] pl-[2px]">
        {MODES.map((m, i) =>
          m === "sep" ? <SideSep key={i} /> : <ToolButton key={i} name={m[0]} label={m[1]} active={m[0] === "select"} />
        )}
      </div>
    </div>
    <div className={"mt-[8px] border-b border-[#9cc3d8] pb-px " + SIDE_BG}>
      <SideGrip />
      <div className="mt-[7px] pl-[2px]">
        <ToolButton name="rotateCw" label="Rotate clockwise" />
        <ToolButton name="rotateCcw" label="Rotate anti-clockwise" />
        <input
          aria-label="Rotation angle"
          defaultValue="0°"
          className="ml-px block h-[33px] w-[45px] bg-white font-['Liberation_Sans',sans-serif] text-[27px] leading-8 text-black"
        />
        <div className="pt-[3px]">
          <SideSep />
        </div>
        <ToolButton name="mirrorH" label="X-mirror" />
        <ToolButton name="mirrorV" label="Y-mirror" />
      </div>
    </div>
  </aside>
);

const DEVICES = [
  "2N2222A",
  "BC547",
  "BUTTON",
  "BUZZER",
  "ERJ-1WYJ221U",
  "LED-BLUE",
  "LED-YELLOW",
  "MINRES10K",
  "MINRES220R",
  "SOUNDER",
  "STM32F103C6",
];

const Overview = () => (
  <div className="h-[101px] shrink-0 border-2 border-[#6a6a66] bg-[#dfdfcf]">
    <svg viewBox="0 0 218 97" className="block h-full w-full" fill="none" shapeRendering="crispEdges" aria-hidden="true">
      <path d="M82 2h65" stroke="#000" strokeWidth="2" strokeDasharray="5 1 3 2 7 1" />
      <path d="M30 21h77" stroke="#000" strokeDasharray="9 2 11 4 5 1" />
      <path d="M0 5.5h218M0 91.5h218" stroke="#00b000" />
      <rect x="14.5" y="6.5" width="190" height="84" stroke="#0000b0" />
      <rect x="157.5" y="44.5" width="24" height="41" stroke="#000" />
      <path d="M88 54h55v-4h11M153 55h-6v25h-44v-14M117 39v15M187 37v10h-2M98 52h6M125 52h8M112 80h8" stroke="#000" />
      <path d="M88 51v4M86 52h5M103 72v5M101 75h5M115 42h5M185 37h5M117 42v10" stroke="#000" strokeWidth="2" />
      <path d="M17 9h1M17 12h1M133 8h1M152 12h1M157 15h1M155 19h1M67 32h1M88 79h1" stroke="#000" />
    </svg>
  </div>
);

const DevicePanel = () => (
  <section className="mr-1 flex w-[222px] shrink-0 flex-col gap-1 bg-[#a9c8dc] font-['Liberation_Sans',sans-serif] text-[27px] text-black">
    <Overview />
    <div className="flex flex-1 flex-col border border-[#6a6a66]">
      <div className="flex h-[43px] shrink-0 items-center bg-linear-to-b from-[#e4f2f9] via-[#d4e8f4] to-[#b4d0e2] pl-[5px]">
        {["P", "L"].map((c) => (
          <button
            key={c}
            type="button"
            className="mr-[10px] flex size-[30px] items-center justify-center rounded-[4px] bg-[#0550dc] font-['Open_Sans',sans-serif] text-[26px] leading-[30px] font-semibold text-white"
          >
            {c}
          </button>
        ))}
        <h2 className="ml-[6px] pt-[2px] leading-8">DEVICES</h2>
      </div>
      <ul
        role="listbox"
        aria-label="Devices"
        className="flex-1 border-x-2 border-b-2 border-[#0078d7] bg-white leading-[31px]"
      >
        {DEVICES.map((d, i) => (
          <li
            key={d}
            role="option"
            aria-selected={i === 0}
            className={"h-[31px] pt-[3px] pl-px " + (i === 0 ? "bg-[#0078d7] text-white" : "")}
          >
            {d}
          </li>
        ))}
      </ul>
    </div>
  </section>
);

/* ---------- schematic ---------- */

const U = 24.5;
const WIRE = "#004000";
const PART = "#800000";
const FILL = "#c8c8a8";
const HIGH = "#ff4040";
const IDLE = "#808080";

const PA = ["10", "11", "12", "13", "14", "15", "16", "17", "29", "30", "31", "32", "33", "34", "37", "38"];
const PB = ["18", "19", "20", "39", "40", "41", "42", "43", "45", "46", "21", "22", "25", "26", "27", "28"];
const LEFT_PINS = [
  ...PA.map((n, i) => ({ n, row: i, name: i === 0 ? "PA0-WKUP" : `PA${i}` })),
  ...PB.map((n, i) => ({ n, row: i + 17, name: `PB${i}` })),
];
const RIGHT_PINS = [
  { n: "7", row: 0, name: "NRST", c: HIGH },
  { n: "2", row: 15, name: "PC13_RTC", c: IDLE },
  { n: "3", row: 16, name: "PC14-OSC32_IN", c: IDLE },
  { n: "4", row: 17, name: "PC15-OSC32_OUT", c: IDLE },
  { n: "5", row: 20, name: "OSCIN_PD0", c: IDLE },
  { n: "6", row: 21, name: "OSCOUT_PD1", c: IDLE },
  { n: "1", row: 28, name: "VBAT", c: "none" },
  { n: "44", row: 32, name: "BOOT0", c: HIGH },
];

const STEPS = [1, 2, 3, 4, 5, 6, 7, 8, 9].map((i) => Math.floor(i * U));

const Power = ({ x, y }: { x: number; y: number }) => (
  <path d={`M${x} ${y - 21}L${x - 11} ${y}H${x + 11}ZV${y}`} fill="none" stroke={WIRE} strokeWidth="4" />
);

const Dot = ({ x, y, c }: { x: number; y: number; c: string }) => <rect x={x} y={y} width="12" height="12" fill={c} />;

const Mcu = () => (
  <g>
    <rect x="2669" y="1032" width="319" height="834" fill={FILL} stroke={PART} strokeWidth="4" strokeLinejoin="round" />
    {LEFT_PINS.map((p) => {
      const y = Math.floor(1057 + p.row * U);
      return (
        <g key={p.n}>
          <path d={`M2619 ${y}H2669`} stroke={PART} strokeWidth="4" />
          <rect x="2648" y={y - 17} width="10" height="10" fill={p.n === "10" || p.n === "13" ? HIGH : IDLE} />
          <text x="2646" y={y - 4} textAnchor="end">
            {p.n}
          </text>
          <text x="2681" y={y + 8}>
            {p.name}
          </text>
        </g>
      );
    })}
    {RIGHT_PINS.map((p) => {
      const y = Math.floor(1057 + p.row * U);
      return (
        <g key={p.n}>
          <path d={`M2988 ${y}H3039`} stroke={PART} strokeWidth="4" />
          <rect x="2999" y={y - 17} width="10" height="10" fill={p.c} />
          <text x="3012" y={y - 4}>
            {p.n}
          </text>
          <text x="2976" y={y + 8} textAnchor="end">
            {p.name}
          </text>
        </g>
      );
    })}
    <text x="2667" y="1024" fontSize="30">
      U1
    </text>
    <text x="2667" y="1886">
      STM32F103C6
    </text>
    <text x="2667" y="1911">
      VDDA=VDD
    </text>
    <text x="2667" y="1935">
      VSSA=VSS
    </text>
  </g>
);

const Schematic = () => (
  <svg className="block h-full w-full" fontSize="20" fill="#000" role="img" aria-label="Door lock indication schematic">
    <defs>
      <pattern id="grid" x="65" y="149" width="245" height="245" patternUnits="userSpaceOnUse">
        <g shapeRendering="crispEdges" fill="#bdbdad">
          {STEPS.map((s) => (
            <React.Fragment key={s}>
              <rect x={s} y="0" width="1" height="245" />
              <rect x="0" y={s} width="245" height="1" />
            </React.Fragment>
          ))}
          <rect x="0" y="0" width="1" height="245" />
          <rect x="244" y="0" width="1" height="245" />
          <rect x="0" y="0" width="245" height="1" />
          <rect x="0" y="244" width="245" height="1" />
        </g>
      </pattern>
    </defs>
    <rect width="100%" height="100%" fill="url(#grid)" />
    <g transform="translate(-277 -222)">
      <rect
        x="832.5"
        y="248.5"
        width="2450"
        height="1716"
        fill="none"
        stroke="#0000b4"
        shapeRendering="crispEdges"
      />

      {/* annotations */}
      <g fill={PART}>
        <g className="font-['Open_Sans',sans-serif]" fontSize="30" fontWeight="600">
          <text x="857" y="284" xmlSpace="preserve">
            {"Write  ARXML"}
          </text>
          <text x="857" y="333">
            Generate RTE and Implement the runnables
          </text>
          <text x="857" y="382">
            Mape RTE Events to OS Tasks
          </text>
        </g>
        <g className="font-['DejaVu_Serif_Condensed','DejaVu_Serif',serif]" fontWeight="700" fontSize="36">
          <text x="2352" y="309">
            Mastering Embedded System Online Diploma (KS)
          </text>
          <text x="2597" y="382">
            www.learn-in-depth.com
          </text>
          <text x="2670" y="456">
            FIrst Term Project 1
          </text>
          <text x="2646" y="530" xmlSpace="preserve">
            {"Eng:  Manal"}
          </text>
          <text x="1787" y="1755" fontSize="38">
            ALARM
          </text>
          <text x="1028" y="586" fontSize="70">
            Door Lock indication Project
          </text>
        </g>
        <text x="1517" y="802" fontSize="41">
          Bit 0
        </text>
      </g>

      {/* wires */}
      <g fill="none" stroke={WIRE} strokeWidth="4" strokeLinejoin="round">
        <path d="M1787 1180V1228H1873V1204" />
        <path d="M1996 1204H2130V1228H2498V1130H2619" />
        <path d="M2155 934V1008M2155 1132V1228" />
        <path d="M1983 1474V1596M1983 1694V1743H2056" />
        <path d="M2181 1743H2547V1228H2619" />
        <path d="M3039 1057H3061V861" />
        <path d="M1764 1180H1812M1775 1167H1799M1785 1155H1789" strokeLinecap="round" />
      </g>
      <Power x={2155} y={934} />
      <Power x={1983} y={1474} />
      <Power x={3061} y={861} />
      <circle cx="2155" cy="1228" r="7" fill={WIRE} />
      <circle cx="3061" cy="960" r="7" fill={WIRE} />

      {/* parts */}
      <g fill={FILL} stroke={PART} strokeWidth="4" strokeLinejoin="round">
        <path d="M2155 1008V1132M2056 1743H2181" />
        <rect x="2145" y="1032" width="20" height="74" />
        <rect x="2081" y="1733" width="74" height="20" />
        <path d="M1873 1204H1899M1970 1204H1996M1899 1184H1970" />
        <rect x="1914" y="1172" width="40" height="12" />
        <circle cx="1905" cy="1204" r="6" />
        <circle cx="1963" cy="1204" r="6" />
        <path d="M1983 1596V1694" />
        <circle cx="1983" cy="1645" r="29" fill="#ffff20" />
        <path d="M1983 1616V1638M1983 1657V1674M1970 1638H1997L1983 1655ZM1971 1657H1995" fill="none" />
      </g>
      <circle cx="1983" cy="1180" r="9" fill="#400000" stroke="#ff0000" strokeWidth="3" />
      <path d="M1983 1175V1186M1981 1175H1985M1981 1186H1985" stroke="#ff0000" strokeWidth="2" />

      {/* logic level markers */}
      <Dot x={2136} y={1002} c={HIGH} />
      <Dot x={2136} y={1125} c={HIGH} />
      <Dot x={1867} y={1186} c="#4040ff" />
      <Dot x={1989} y={1186} c={HIGH} />
      <Dot x={1989} y={1590} c={HIGH} />
      <Dot x={2173} y={1725} c={IDLE} />

      {/* sheet origin and voltage probe */}
      <g fill="none" stroke="#0000c0">
        <path d="M2044 1106.5H2070M2057.5 1094V1119" />
        <circle cx="2057.5" cy="1106.5" r="9.5" />
        <path d="M2228 1229L2246 1211M2265 1193L2240 1205L2254 1217Z" strokeWidth="2" />
      </g>

      {/* reference designators and values */}
      <text x="2130" y="894">
        VCC
      </text>
      <text x="1959" y="1432">
        VCC
      </text>
      <text x="1763" y="1138">
        GND
      </text>
      <text x="2179" y="1060" fontSize="30">
        R1
      </text>
      <text x="2180" y="1086">
        10k
      </text>
      <text x="2027" y="1643" fontSize="30">
        D1
      </text>
      <text x="2027" y="1669">
        LED-YELLOW
      </text>
      <text x="2079" y="1725" fontSize="30">
        R2
      </text>
      <text x="2080" y="1774">
        100
      </text>
      <text x="2277" y="1200" fill="#0000c8">
        R1(2)
      </text>
      <text x="2277" y="1223">
        V=8.99623
      </text>
      <Mcu />
    </g>
  </svg>
);

/* ---------- status bar ---------- */

const StatusBar = () => (
  <footer className="mt-[2px] flex h-[33px] shrink-0 items-start gap-[6px] overflow-hidden font-['Liberation_Sans',sans-serif] text-[27px] leading-8 whitespace-nowrap">
    <div className="flex h-[48px] w-[456px] items-start border-r border-[#9cc3d8] bg-linear-to-b from-[#e4f2f9] to-[#a9d0e6]">
      <Grip />
      <div className="ml-[15px] flex items-start gap-5 pt-2">
        {(["play", "step", "pause", "stop"] as const).map((n) => (
          <button key={n} type="button" aria-label={n}>
            {I[n]}
          </button>
        ))}
      </div>
      <span className="mt-1 ml-[13px] h-10 w-[2px] border-r border-white bg-[#9aa7b0]" />
      <button type="button" className="ml-[10px] flex items-start text-black">
        <span className="pt-2">{I.info}</span>
        <span className="ml-[14px] pt-[7px]">3 Message(s)</span>
      </button>
    </div>
    <div className="flex h-[48px] w-[412px] items-start overflow-hidden border-r-2 border-[#9cc3d8] bg-linear-to-b from-[#e4f2f9] to-[#a9d0e6]">
      <Grip />
      <p className="ml-2 pt-[7px] text-[#004000]">ANIMATING: 00:00:06.803375 (CPU load 12%)</p>
    </div>
    <div className="flex h-[48px] flex-1 bg-linear-to-b from-[#e4f2f9] to-[#a9d0e6]">
      <Grip />
    </div>
  </footer>
);

export default function App() {
  return (
    <div className="flex h-screen flex-col overflow-hidden bg-[#e1e9f0] font-['Open_Sans',sans-serif]">
      <Defs />
      <TitleBar />
      <MenuBar />
      <Toolbar />
      <TabBar />
      <div className="flex min-h-0 flex-1 bg-[#a9c8dc] pt-[6px]">
        <SideTools />
        <DevicePanel />
        <main className="mr-1 min-w-0 flex-1 border border-[#6a6a66] bg-[#dfdfcf] font-['Liberation_Sans',sans-serif]">
          <Schematic />
        </main>
      </div>
      <StatusBar />
    </div>
  );
}
